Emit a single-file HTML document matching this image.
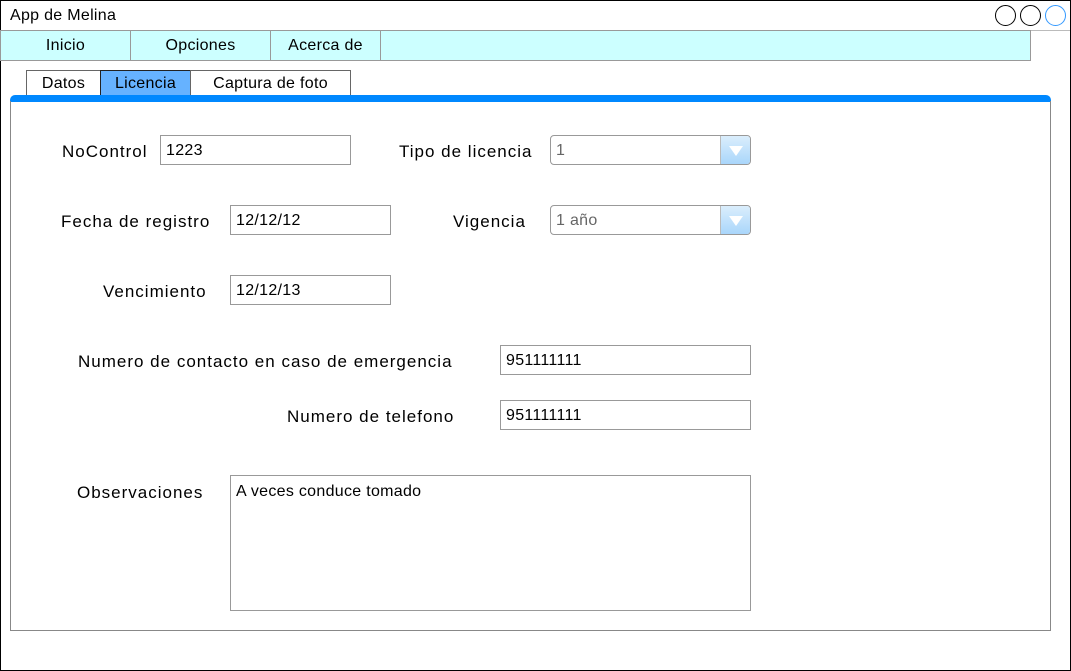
<!DOCTYPE html>
<html><head><meta charset="utf-8"><style>
*{box-sizing:border-box;margin:0;padding:0}
body{width:1071px;height:671px;background:#fff;font-family:"Liberation Sans",sans-serif;position:relative;overflow:hidden;color:#000}
.a{position:absolute}
.win{left:0;top:0;width:1071px;height:671px;border:1px solid #000}
.lbl{font-size:17px;white-space:nowrap;letter-spacing:1px}
.in{border:1px solid #999;background:#fff;font-size:16px;letter-spacing:0.3px;padding-left:5px;padding-top:1px;line-height:28px;height:30px}
.sel{border:1px solid #999;border-radius:4px;font-size:16px;letter-spacing:0.3px;color:#666;padding-left:5px;padding-top:1px;line-height:28px;height:30px;background:#fff;overflow:hidden}
.sel .b{position:absolute;right:0;top:0;width:30px;height:28px;background:linear-gradient(#dbeefc,#a9d6fb);border-left:1px solid #bbb}
.sel .b:after{content:"";position:absolute;left:8px;top:10px;border-left:7px solid transparent;border-right:7px solid transparent;border-top:10px solid #fff}
.circ{width:21px;height:21px;border-radius:50%;border:1px solid #000;top:5px}
.menu{top:30px;height:31px;background:#ccffff;border:1px solid #999;font-size:16px;text-align:center;line-height:29px;letter-spacing:0.3px}
.tab{top:70px;height:26px;border:1px solid #666;font-size:16px;text-align:center;line-height:26px;background:#fff;letter-spacing:0.3px}
</style></head><body>
<div class="a win"></div>
<div class="a" style="left:10px;top:7px;font-size:16px;letter-spacing:0.3px">App de Melina</div>
<div class="a circ" style="left:995px"></div>
<div class="a circ" style="left:1020px"></div>
<div class="a circ" style="left:1045px;border-color:#3399ff"></div>
<div class="a" style="left:1px;top:30px;width:1069px;height:1px;background:#bbb"></div>
<div class="a menu" style="left:0;width:131px">Inicio</div>
<div class="a menu" style="left:130px;width:141px">Opciones</div>
<div class="a menu" style="left:270px;width:111px">Acerca de</div>
<div class="a menu" style="left:380px;width:651px"></div>
<div class="a tab" style="left:26px;width:75px">Datos</div>
<div class="a tab" style="left:100px;width:91px;background:#66b2ff;border-color:#222">Licencia</div>
<div class="a tab" style="left:190px;width:161px">Captura de foto</div>
<div class="a" style="left:10px;top:95px;width:1041px;height:7px;background:#0088ff;border-radius:5px 5px 0 0"></div>
<div class="a" style="left:10px;top:101px;width:1041px;height:530px;border:1px solid #888;border-top:none"></div>

<div class="a lbl" style="left:62px;top:142px">NoControl</div>
<div class="a in" style="left:160px;top:135px;width:191px">1223</div>
<div class="a lbl" style="left:399px;top:142px">Tipo de licencia</div>
<div class="a sel" style="left:550px;top:135px;width:201px">1<div class="b"></div></div>

<div class="a lbl" style="left:61px;top:212px">Fecha de registro</div>
<div class="a in" style="left:230px;top:205px;width:161px">12/12/12</div>
<div class="a lbl" style="left:453px;top:212px">Vigencia</div>
<div class="a sel" style="left:550px;top:205px;width:201px">1 año<div class="b"></div></div>

<div class="a lbl" style="left:103px;top:282px">Vencimiento</div>
<div class="a in" style="left:230px;top:275px;width:161px">12/12/13</div>

<div class="a lbl" style="left:78px;top:352px">Numero de contacto en caso de emergencia</div>
<div class="a in" style="left:500px;top:345px;width:251px">951111111</div>
<div class="a lbl" style="left:287px;top:407px">Numero de telefono</div>
<div class="a in" style="left:500px;top:400px;width:251px">951111111</div>

<div class="a lbl" style="left:77px;top:483px">Observaciones</div>
<div class="a in" style="left:230px;top:475px;width:521px;height:136px;line-height:30px">A veces conduce tomado</div>
</body></html>
